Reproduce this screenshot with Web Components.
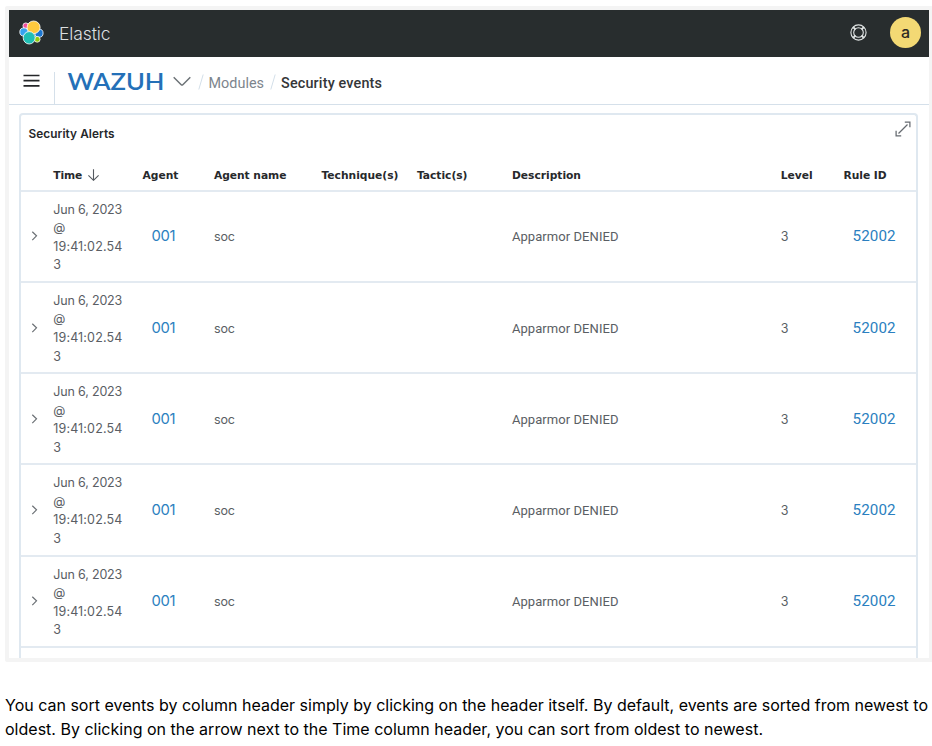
<!DOCTYPE html>
<html lang="en"><head><meta charset="utf-8"><title>Security events</title>
<style>body{margin:0;background:#fff;font-family:Inter,sans-serif}</style></head>
<body><doc-page></doc-page>
<script>
const define=(name,html,init)=>customElements.define(name,class extends HTMLElement{
  connectedCallback(){ if(this.shadowRoot)return; this.attachShadow({mode:'open'}).innerHTML=html; if(init)init.call(this,this.shadowRoot); }
});
/* Label whose letter spacing is adjusted to fill the width given in "w". */
define('fit-label','<style>:host{display:inline-block;white-space:nowrap}span{display:inline-block}</style><span><slot></slot></span>',function(root){
  const s=root.querySelector('span'),w=+this.getAttribute('w');
  const n=this.textContent.length;
  if(w&&n>1){s.style.letterSpacing=((w-s.getBoundingClientRect().width)/(n-1))+'px';}
  if(w)this.style.width=w+'px';
});
define('elastic-logo',`<style>:host{display:block;width:25px;height:25px}svg{display:block}</style>
<svg width="25" height="25" viewBox="0 0 25 25" stroke="#fff" stroke-width="0.8">
<circle cx="6.8" cy="5.8" r="2.9" fill="#f04e98"/><circle cx="4.9" cy="12" r="4.1" fill="#36a2ef"/>
<circle cx="20" cy="13.2" r="4.1" fill="#1c76d0"/><circle cx="18.2" cy="19.3" r="2.9" fill="#93c90e"/>
<ellipse cx="14.6" cy="7.3" rx="6.5" ry="6.3" fill="#fec93e"/><ellipse cx="10.2" cy="17.8" rx="6" ry="6.2" fill="#1fbfb4"/></svg>`);
define('app-header',`<style>:host{display:flex;height:47px;background:#282d2e;align-items:center;padding:0 8px 2px 10px;box-sizing:border-box;color:#dcdfe0}
.name{font:300 17.5px Inter,sans-serif;margin-left:15px;flex:1;margin-top:1px}.help{margin-right:23px;margin-top:0;display:block}
.av{width:31px;height:31px;border-radius:50%;background:#f3d974;color:#2c2b24;font:500 16px/31px Inter,sans-serif;text-align:center;margin-top:0}</style>
<elastic-logo></elastic-logo><div class="name"><fit-label w="51.5">Elastic</fit-label></div>
<svg class="help" width="17" height="17" viewBox="0 0 17 17" fill="none" stroke="#e0e4e4" stroke-width="1.1"><circle cx="8.5" cy="8.5" r="7.6"/><circle cx="8.5" cy="8.5" r="4.8"/><path stroke-width="1.9" d="M3.2 3.2l2.3 2.3M13.8 3.2l-2.3 2.3M3.2 13.8l2.3-2.3M13.8 13.8l-2.3-2.3"/></svg>
<div class="av">a</div>`);
define('crumb-bar',`<style>:host{display:flex;height:48px;border-bottom:1px solid #d5e0ea;box-sizing:border-box;align-items:center;padding-left:14px;font:400 14.4px Roboto,sans-serif;color:#7d858d}
.menu{width:17px;height:13px;margin-right:14px;margin-top:0}.sep{width:1px;height:32px;background:#d5e0ea;align-self:flex-end}.logo{margin-left:12px;margin-top:2px}.dn{margin-left:8px;margin-top:2px}
.sl{margin-left:7px;margin-top:3px}.m{margin-left:4.5px;margin-top:5px}.s{margin-left:5px;font-weight:500;color:#343638;margin-top:5px}svg{display:block}</style>
<svg class="menu" viewBox="0 0 17 13" stroke="#242628" stroke-width="1.7"><path d="M0.5 1.5h16M0.5 6.7h16M0.5 11.8h16"/></svg><div class="sep"></div>
<svg class="logo" width="98" height="30" viewBox="0 0 98 30" overflow="visible"><text x="0.5" y="23" font-family="Lato,sans-serif" font-weight="600" font-size="22.3" fill="#2470b8" textLength="97" lengthAdjust="spacingAndGlyphs">WAZUH</text></svg>
<svg class="dn" width="18" height="11" viewBox="0 0 18 11" fill="none" stroke="#6d7377" stroke-width="1.5"><path d="M.7 1.2l7.5 7.5q.8.7 1.6 0l7.5-7.5"/></svg>
<svg class="sl" width="6" height="16" viewBox="0 0 6 16"><path d="M.8 15.5L5.2.5" stroke="#d3dfe9"/></svg><fit-label class="m" w="55.5">Modules</fit-label>
<svg class="sl" style="margin-left:6px" width="6" height="16" viewBox="0 0 6 16"><path d="M.8 15.5L5.2.5" stroke="#d3dfe9"/></svg><fit-label class="s" w="101">Security events</fit-label>`);
const cols='grid-template-columns:32.4px 89.2px 71.5px 107.5px 95.5px 95px 268.8px 62.8px 1fr;';
define('alert-row',`<style>:host{display:grid;${cols}height:91.25px;box-sizing:border-box;border-bottom:2px solid #e3eaf1;align-items:center;font:400 12.5px Inter,sans-serif;color:#5a5e64}
.time{line-height:18.6px;padding-top:2.8px}.time>*{display:block}.a{font:400 14.8px Inter,sans-serif;color:#2b7fc0;padding:0 0 0 9px}.r{font:400 15.2px Roboto,sans-serif;color:#2b7fc0;padding:0 0 0 9px}.d{font:400 13px Roboto,sans-serif;grid-column:7;padding-top:1.2px}.n{padding-top:1.2px}svg{margin:0 0 0 9px;display:block}</style>
<svg width="9" height="10" viewBox="0 0 9 10" fill="none" stroke="#6b7075" stroke-width="1.2"><path d="M2.3.7l4.2 4.1-4.2 4.3"/></svg>
<div class="time"><fit-label w="69">Jun 6, 2023</fit-label><span>@</span><fit-label w="69">19:41:02.54</fit-label><span>3</span></div>
<div class="a"><fit-label w="24">001</fit-label></div><div class="n"><fit-label w="21">soc</fit-label></div>
<div class="d"><fit-label w="106.5">Apparmor DENIED</fit-label></div><div class="n">3</div><div class="r"><fit-label w="43">52002</fit-label></div>`);
define('alert-table',`<style>:host{display:block}.h{display:grid;${cols}height:35.5px;box-sizing:border-box;border-bottom:2px solid #e3eaf1;font:700 10.7px/14px "DejaVu Sans",sans-serif;color:#27292c;padding-top:12.8px}.h>*{justify-self:start}.t{display:flex}svg{margin:0 0 0 5px}</style>
<div class="h"><span></span><div class="t"><fit-label w="29">Time</fit-label><svg width="13" height="12" viewBox="0 0 13 12" fill="none" stroke="#555a60" stroke-width="1.1"><path d="M6.5.3v11M1.4 6.3l5.1 5 5.1-5"/></svg></div>
<fit-label w="36">Agent</fit-label><fit-label w="72.5">Agent name</fit-label><fit-label w="77">Technique(s)</fit-label><fit-label w="50.5">Tactic(s)</fit-label><fit-label w="69">Description</fit-label><fit-label w="32">Level</fit-label><fit-label w="43">Rule ID</fit-label></div>
<alert-row></alert-row><alert-row></alert-row><alert-row></alert-row><alert-row></alert-row><alert-row></alert-row>`);
define('alert-panel',`<style>:host{display:block;margin:7.6px 11px 0 10.4px;border:2px solid #dfe8f0;border-bottom:0;border-radius:4px 4px 0 0;height:560px;box-sizing:border-box}
header{display:flex;justify-content:space-between;height:41.6px;padding:11px 5.4px 0 7.2px;box-sizing:border-box;font:600 11.8px/17px Inter,sans-serif;color:#26282b}svg{margin-top:-5px}alert-table{margin-left:-.5px}</style>
<header><fit-label w="86">Security Alerts</fit-label><svg width="16" height="16" viewBox="0 0 16 16" fill="none" stroke="#656a70" stroke-width="1.25"><path d="M3.5 12.5l9-9M9.8 1.1h5.1v5.1M1.1 9.8v5.1h5.1"/></svg></header><alert-table></alert-table>`);
define('doc-page',`<style>:host{display:block;width:932px;height:746px;overflow:hidden;padding:6px 0 0 5px;box-sizing:border-box}
.shot{width:920px;height:648px;overflow:hidden;border:4px solid #f4f4f4;border-radius:2px}
p{margin:31px 0 0;font:400 16px/24px Inter,sans-serif;color:#000;white-space:nowrap}p fit-label{display:block}</style>
<div class="shot"><app-header></app-header><crumb-bar></crumb-bar><alert-panel></alert-panel></div>
<p><fit-label w="923">You can sort events by column header simply by clicking on the header itself. By default, events are sorted from newest to</fit-label><fit-label w="758">oldest. By clicking on the arrow next to the Time column header, you can sort from oldest to newest.</fit-label></p>`);
</script></body></html>
